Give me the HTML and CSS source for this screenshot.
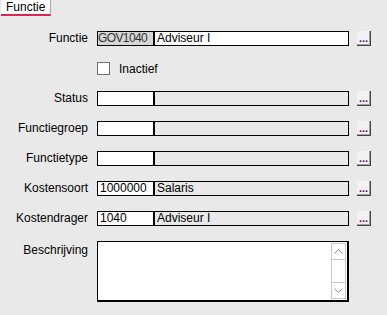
FILE: index.html
```html
<html lang="en">
<head>
  <meta charset="UTF-8">
  <title>Functie</title>
  <link rel="stylesheet" href="styles.css">
</head>
<body>

<div class="tabs">
  <div class="tab tab--active">Functie</div>
</div>

<div class="form">
  <label class="lbl">Functie</label>
  <div class="field">
    <span class="code code--ro">GOV1040</span>
    <span class="desc desc--edit">Adviseur I</span>
  </div>
  <button class="pick">...</button>

  <span></span>
  <div class="check">
    <span class="box"></span>
    <span>Inactief</span>
  </div>
  <span></span>

  <label class="lbl">Status</label>
  <div class="field">
    <span class="code"></span>
    <span class="desc"></span>
  </div>
  <button class="pick">...</button>

  <label class="lbl">Functiegroep</label>
  <div class="field">
    <span class="code"></span>
    <span class="desc"></span>
  </div>
  <button class="pick">...</button>

  <label class="lbl">Functietype</label>
  <div class="field">
    <span class="code"></span>
    <span class="desc"></span>
  </div>
  <button class="pick">...</button>

  <label class="lbl">Kostensoort</label>
  <div class="field">
    <span class="code">1000000</span>
    <span class="desc">Salaris</span>
  </div>
  <button class="pick">...</button>

  <label class="lbl">Kostendrager</label>
  <div class="field">
    <span class="code">1040</span>
    <span class="desc">Adviseur I</span>
  </div>
  <button class="pick">...</button>

  <label class="lbl lbl--top">Beschrijving</label>
  <div class="memo">
    <div class="memo_text"></div>
    <div class="scroll">
      <span class="arrow">
        <svg viewBox="0 0 9 5" width="9" height="5"><polyline points="0.5,4.5 4.5,0.5 8.5,4.5"/></svg>
      </span>
      <span class="track"></span>
      <span class="arrow">
        <svg viewBox="0 0 9 5" width="9" height="5"><polyline points="0.5,0.5 4.5,4.5 8.5,0.5"/></svg>
      </span>
    </div>
  </div>
  <span></span>
</div>

</body>
</html>
```

FILE: styles.css
```css
* {
  padding: 0;
  margin: 0;
  box-sizing: border-box;
}

body {
  margin: 0;
  background: #e9e9e9;
  font-family: 'Liberation Sans', Arial, sans-serif;
  font-size: 12px;
  color: #000;
  overflow: hidden;
}

.tabs {
  display: flex;
  height: 16px;
  padding-left: 1px;
}

.tab {
  width: 50px;
  height: 16px;
  padding: 1px 0 0 5px;
  background: #fff;
  border-right: 1px solid #a9a9a9;
  border-bottom: 2px solid #e0244c;
  line-height: 12px;
}

.form {
  display: grid;
  grid-template-columns: 88px 253px 14px;
  grid-template-rows: repeat(7, 15px) 61px;
  column-gap: 8px;
  row-gap: 15px;
  padding-top: 15px;
}

.lbl {
  text-align: right;
  line-height: 15px;
}

.lbl--top {
  line-height: 12px;
  padding-top: 3px;
}

.field {
  margin-left: 1px;
  display: flex;
  height: 15px;
  border: 1px solid #000;
  background: #e9e9e9;
  line-height: 13px;
}

.code {
  width: 57px;
  padding-left: 2px;
  background: #fff;
  border-right: 2px solid #000;
}

.code--ro {
  padding-left: 0;
  background: #d6d6d6;
  color: #333;
  letter-spacing: -0.6px;
}

.desc {
  flex: 1;
  padding-left: 2px;
}

.desc--edit {
  background: #fff;
}

.pick {
  width: 14px;
  height: 15px;
  background: #f2f2f2;
  border: none;
  border-right: 1px solid #444;
  border-bottom: 1px solid #444;
  box-shadow: inset -1px -1px 0 #a0a0a0;
  color: #6a006a;
  font-family: 'Liberation Sans', Arial, sans-serif;
  font-size: 11px;
  font-weight: bold;
  line-height: 10px;
  padding: 0;
}

.check {
  margin-left: 1px;
  display: flex;
  align-items: center;
  gap: 9px;
}

.box {
  width: 13px;
  height: 13px;
  background: #fff;
  border: 1px solid #6e6e6e;
}

.memo {
  margin-left: 1px;
  height: 61px;
  display: flex;
  border: 1px solid #000;
  border-right-width: 2px;
  border-bottom-width: 2px;
  background: #fff;
}

.memo_text {
  flex: 1;
}

.scroll {
  width: 17px;
  display: flex;
  flex-direction: column;
  padding: 1px;
}

.arrow {
  height: 17px;
  display: flex;
  align-items: center;
  justify-content: center;
  border: 1px solid #c8c8c8;
}

.arrow svg {
  fill: none;
  stroke: #909090;
  stroke-width: 1;
}

.track {
  flex: 1;
  border-left: 1px solid #c8c8c8;
  border-right: 1px solid #c8c8c8;
}
```
